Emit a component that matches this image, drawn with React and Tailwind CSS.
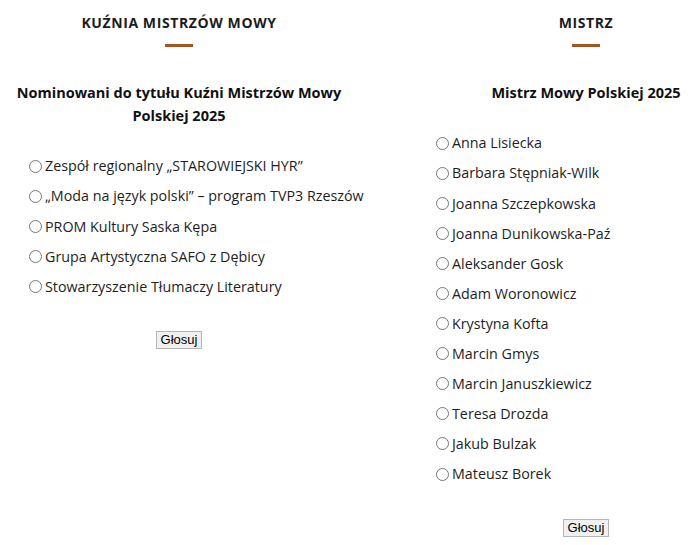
const nominees = [
  "Zespół regionalny „STAROWIEJSKI HYR”",
  "„Moda na język polski” – program TVP3 Rzeszów",
  "PROM Kultury Saska Kępa",
  "Grupa Artystyczna SAFO z Dębicy",
  "Stowarzyszenie Tłumaczy Literatury",
];

const masters = [
  "Anna Lisiecka",
  "Barbara Stępniak-Wilk",
  "Joanna Szczepkowska",
  "Joanna Dunikowska-Paź",
  "Aleksander Gosk",
  "Adam Woronowicz",
  "Krystyna Kofta",
  "Marcin Gmys",
  "Marcin Januszkiewicz",
  "Teresa Drozda",
  "Jakub Bulzak",
  "Mateusz Borek",
];

function Poll({ name, title, question, options }) {
  return (
    <div className="w-[358px] shrink-0">
      <h2 className="pt-[11px] text-center text-[14px] font-bold uppercase leading-6 tracking-[0.6px] text-[#1c1c1c]">
        {title}
      </h2>
      <div className="mx-auto mt-[9px] h-[3px] w-[28px] bg-[#a4541f]" />
      <h3 className="mt-[34px] px-3 text-center text-[14.5px] font-bold leading-[23px] text-[#111]">
        {question}
      </h3>
      <ul className="mt-[24px] pl-[29px]">
        {options.map((opt) => (
          <li
            key={opt}
            className="flex h-[30.1px] items-center whitespace-nowrap text-[14.3px] text-[#1e1e1e]"
          >
            <input type="radio" name={name} className="mr-[3px] h-[13px] w-[13px]" />
            <span>{opt}</span>
          </li>
        ))}
      </ul>
      <div className="mt-[25px] text-center">
        <button
          type="button"
          className="border border-[#b5b5b5] bg-[#f0f0f0] px-[4px] py-0 font-['Liberation_Sans',Arial,sans-serif] text-[13px] leading-[16px] text-black"
        >
          Głosuj
        </button>
      </div>
    </div>
  );
}

export default function App() {
  return (
    <div className="flex h-[545px] w-[700px] overflow-hidden bg-white font-['Open_Sans',sans-serif]">
      <Poll
        name="kuznia"
        title="Kuźnia Mistrzów Mowy"
        question="Nominowani do tytułu Kuźni Mistrzów Mowy Polskiej 2025"
        options={nominees}
      />
      <div className="ml-[49px]">
        <Poll name="mistrz" title="Mistrz" question="Mistrz Mowy Polskiej 2025" options={masters} />
      </div>
    </div>
  );
}
